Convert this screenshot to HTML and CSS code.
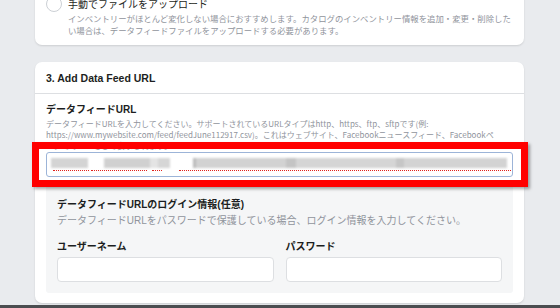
FILE: index.html
```html
<!DOCTYPE html>
<html lang="ja">
<head>
<meta charset="utf-8">
<link rel="stylesheet" href="styles.css">
</head>
<body>
<div class="page">
  <div class="card card-top">
    <div class="option">
      <span class="radio"></span>
      <div class="option-text">
        <div class="option-title">手動でファイルをアップロード</div>
        <div class="option-desc">インベントリーがほとんど変化しない場合におすすめします。カタログのインベントリー情報を追加・変更・削除したい場合は、データフィードファイルをアップロードする必要があります。</div>
      </div>
    </div>
  </div>

  <div class="card card-main">
    <div class="card-header">3. Add Data Feed URL</div>
    <div class="card-body">
      <div class="field-title">データフィードURL</div>
      <div class="field-desc">データフィードURLを入力してください。サポートされているURLタイプはhttp、https、ftp、sftpです(例:<br>https://www.mywebsite.com/feed/feedJune112917.csv)。これはウェブサイト、Facebookニュースフィード、Facebookペ<br>ージでのURLとして表示されます。</div>
      <div class="url-wrap">
        <div class="url-input">
          <div class="mosaic">
            <span class="blk b1"></span><span class="blk b2"></span><span class="blk b3"></span><span class="blk b4"></span><span class="blk b5"></span><span class="blk b6"></span><span class="blk b7"></span><span class="blk b8"></span><span class="blk b9"></span><span class="blk b10"></span><span class="blk b11"></span><span class="blk b12"></span>
          </div>
          <div class="squiggle">
            <span class="sq s1"></span><span class="sq s2"></span><span class="sq s3"></span><span class="sq s4"></span>
          </div>
        </div>
        <div class="highlight"></div>
      </div>
      <div class="login-panel">
        <div class="login-title">データフィードURLのログイン情報(任意)</div>
        <div class="login-desc">データフィードURLをパスワードで保護している場合、ログイン情報を入力してください。</div>
        <div class="login-grid">
          <div class="login-field">
            <div class="login-label">ユーザーネーム</div>
            <div class="text-input"></div>
          </div>
          <div class="login-field">
            <div class="login-label">パスワード</div>
            <div class="text-input"></div>
          </div>
        </div>
      </div>
    </div>
  </div>
</div>
<div class="bottom-bar"></div>
</body>
</html>
```

FILE: styles.css
```css
html, body {
  margin: 0;
  padding: 0;
}
body {
  width: 560px;
  height: 308px;
  overflow: hidden;
  background: #e9ebee;
  font-family: "Liberation Sans", "Noto Sans CJK JP", sans-serif;
  color: #1c1e21;
  display: flex;
  flex-direction: column;
}
.page {
  padding-left: 35px;
  width: 489px;
  flex: 1;
  display: flex;
  flex-direction: column;
}
.card {
  background: #fff;
  border-radius: 7px;
  box-shadow: 0 1px 2px rgba(0, 0, 0, 0.12);
}
.card-top {
  margin-top: -10px;
  padding: 9px 11px 8px;
}
.option {
  display: flex;
  align-items: flex-start;
  gap: 6px;
}
.radio {
  width: 14px;
  height: 14px;
  border: 1px solid #ccd0d5;
  border-radius: 50%;
  margin-top: -3px;
  flex: none;
}
.option-title {
  font-size: 10px;
  line-height: 12px;
  height: 14px;
}
.option-desc {
  font-size: 8.4px;
  line-height: 12px;
  color: #90949c;
}
.card-main {
  margin-top: 17px;
}
.card-header {
  height: 31px;
  display: flex;
  align-items: center;
  padding-left: 11px;
  font-size: 10.5px;
  font-weight: bold;
  border-bottom: 1px solid #dddfe2;
}
.card-body {
  padding: 10px 11px 10px;
}
.field-title {
  font-size: 10px;
  font-weight: bold;
  line-height: 12px;
}
.field-desc {
  margin-top: 2px;
  font-family: "Noto Sans CJK JP", sans-serif;
  font-size: 8px;
  line-height: 11px;
  color: #90949c;
  white-space: nowrap;
}
.url-wrap {
  position: relative;
  margin-top: 1px;
}
.url-input {
  height: 23px;
  border: 1px solid #9cb4d8;
  border-radius: 3px;
  background: #fff;
  position: relative;
  overflow: hidden;
}
.mosaic {
  display: flex;
  align-items: center;
  height: 10px;
  margin: 5px 5px 0 4px;
  filter: blur(1px);
}
.blk {
  height: 10px;
  flex: none;
}
.b1 { width: 37px; background: #d4d4d4; }
.b2 { width: 16px; background: transparent; }
.b3 { width: 46px; background: #d0d0d0; }
.b4 { width: 8px; background: #e4e4e4; }
.b5 { width: 12px; background: #d6d6d6; }
.b6 { width: 23px; background: transparent; }
.b7 { width: 3px; background: #bbbbbb; }
.b8 { width: 90px; background: #d2d2d2; }
.b9 { width: 10px; background: #c4c4c4; }
.b10 { width: 100px; background: #d5d5d5; }
.b11 { width: 8px; background: #c6c6c6; }
.b12 { width: 103px; background: #d3d3d3; }
.squiggle {
  display: flex;
  height: 2px;
  margin: 1px 5px 0 6px;
}
.sq {
  height: 1px;
  flex: none;
  border-bottom: 1px dotted #e0201c;
}
.s1 { width: 36px; }
.s2 { width: 56px; margin-left: 2px; }
.s3 { width: 10px; margin-left: 5px; }
.s4 { width: 342px; margin-left: 17px; }
.highlight {
  position: absolute;
  left: -14px;
  top: -10px;
  right: -15px;
  bottom: -10px;
  border: 7px solid #ff0000;
  box-shadow: 2px 2px 3px rgba(0, 0, 0, 0.35);
  pointer-events: none;
}
.login-panel {
  margin-top: 10px;
  background: #f5f6f7;
  padding: 12px 11px 11px;
  border-radius: 0 0 3px 3px;
}
.login-title {
  font-size: 10px;
  font-weight: bold;
  line-height: 12px;
}
.login-desc {
  margin-top: 3px;
  font-size: 10px;
  line-height: 13px;
  color: #90949c;
}
.login-grid {
  margin-top: 14px;
  display: grid;
  grid-template-columns: 1fr 1fr;
  gap: 12px;
}
.login-label {
  font-size: 10px;
  font-weight: bold;
  line-height: 12px;
}
.text-input {
  margin-top: 4px;
  height: 23px;
  background: #fff;
  border: 1px solid #dddfe2;
  border-radius: 4px;
}
.bottom-bar {
  height: 3px;
  background: #4b4d50;
  flex: none;
}
```
